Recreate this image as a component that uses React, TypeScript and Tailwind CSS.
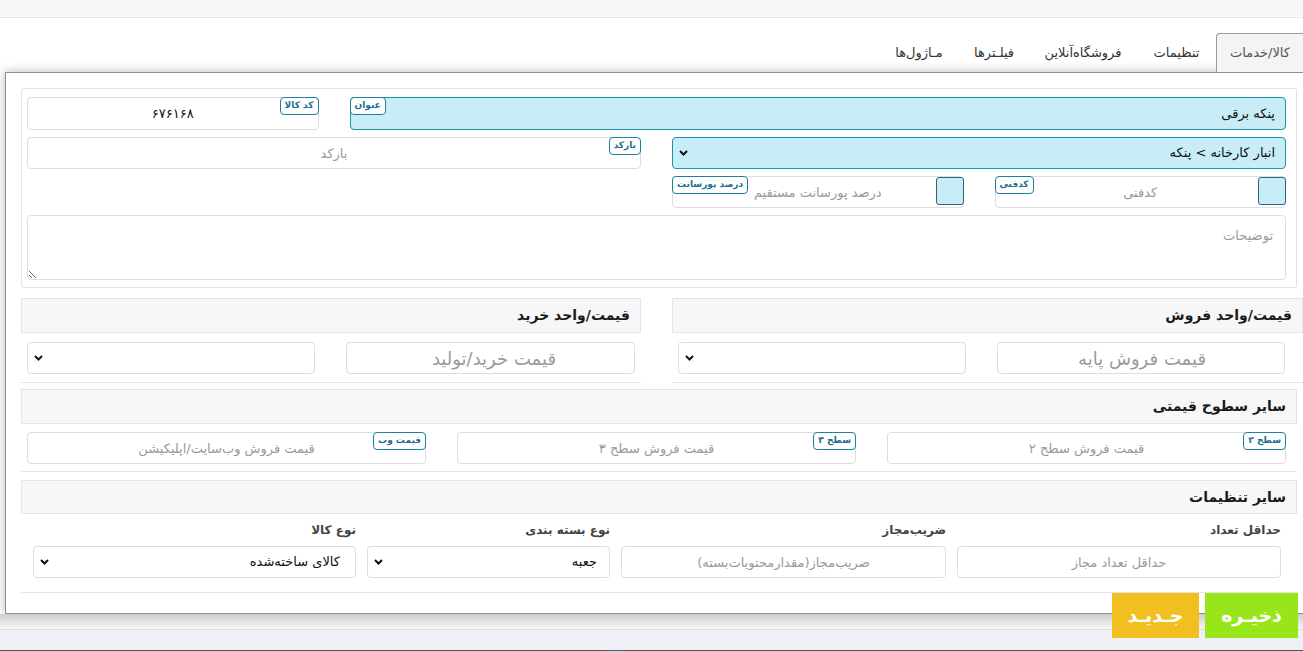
import clsx from 'clsx';

function Chevron() {
  return (
    <svg width="9" height="6" viewBox="0 0 9 6" className="shrink-0">
      <path d="M1 1l3.5 3.5L8 1" stroke="#111" strokeWidth="2" fill="none" />
    </svg>
  );
}

function Badge({ label, side = 'right' }: { label: string; side?: 'left' | 'right' }) {
  return (
    <span
      className={clsx(
        'absolute top-0 flex h-[18px] items-center rounded-[4px] border border-[#1d7fa3] bg-white px-[4px] text-[9px] font-bold text-[#1a6f8f]',
        side === 'left' ? 'left-0' : 'right-0',
      )}
    >
      {label}
    </span>
  );
}

function Field({
  placeholder,
  value,
  badge,
  badgeSide,
  className,
  square,
}: {
  placeholder?: string;
  value?: string;
  badge?: string;
  badgeSide?: 'left' | 'right';
  className?: string;
  square?: boolean;
}) {
  return (
    <div className={clsx('relative h-[32px]', className)}>
      <input
        readOnly
        placeholder={placeholder}
        value={value ?? ''}
        className="h-full w-full rounded-[4px] border border-[#dddddd] bg-white text-center text-[13px] text-[#111] outline-none placeholder:text-[#9a9a9a]"
      />
      {square && (
        <span className="absolute top-[1px] right-0 h-[28px] w-[28px] rounded-[3px] border border-[#2d6478] bg-[#c9edf6]" />
      )}
      {badge && <Badge label={badge} side={badgeSide} />}
    </div>
  );
}

function Select({ value, className, cyan }: { value?: string; className?: string; cyan?: boolean }) {
  return (
    <div
      className={clsx(
        'flex h-[32px] items-center justify-between rounded-[4px] border pl-[6px] text-[13px] text-[#111]',
        cyan ? 'border-[#1b95a8] bg-[#c9edf6] pr-[10px]' : 'border-[#dddddd] bg-white pr-[12px]',
        className,
      )}
    >
      <span>{value}</span>
      <Chevron />
    </div>
  );
}

function CardHeader({ title, className }: { title: string; className?: string }) {
  return (
    <div
      className={clsx(
        'flex items-center border border-[#e5e5e5] bg-[#f7f7f7] pr-[10px] text-[14px] font-bold text-[#1a1a1a]',
        className,
      )}
    >
      {title}
    </div>
  );
}

const tabs = [
  { label: 'تنظیمات', w: 'w-[79px]' },
  { label: 'فروشگاه‌آنلاین', w: 'w-[108px]' },
  { label: 'فیلـترها', w: 'w-[70px]' },
  { label: 'مـاژول‌ها', w: 'w-[80px]' },
];

export default function App() {
  return (
    <div className="relative h-[651px] w-[1303px] overflow-hidden bg-white font-['Tahoma','DejaVu_Sans',sans-serif] text-[13px] text-[#222]">
      <div className="h-[18px] border-b border-[#e6e6e6] bg-[#f8f8f8]" />

      {/* tabs */}
      <div dir="rtl" className="relative z-10 mt-[15px] flex h-[39px]">
        <div className="flex w-[87px] items-center justify-center rounded-tl-[4px] border-t border-l border-[#9a9a9a] bg-[#f4f4f4] text-[#555]">
          کالا/خدمات
        </div>
        {tabs.map((t) => (
          <div key={t.label} className={clsx('flex items-center justify-center text-[#333]', t.w)}>
            {t.label}
          </div>
        ))}
      </div>

      {/* panel */}
      <div
        dir="rtl"
        className="ml-[5px] w-[1310px] border border-[#8c8c8c] bg-white pt-[15px] pr-[17px] pb-[20px] pl-[15px] shadow-[0_0_10px_rgba(0,0,0,0.28)]"
      >
        <div className="rounded-[3px] border border-[#e3e3e3] pt-[8px] pr-[10px] pb-[7px] pl-[5px]">
          <div className="grid grid-cols-4 gap-x-[31px] gap-y-[7px]">
            <div className="relative col-span-3 h-[33px]">
              <div className="flex h-full items-center rounded-[4px] border border-[#1b95a8] bg-[#c9edf6] pr-[10px] text-[13px] text-[#111]">
                پنکه برقی
              </div>
              <Badge label="عنوان" side="left" />
            </div>
            <Field value="۶۷۶۱۶۸" badge="کد کالا" className="h-[33px]" />

            <Select value="انبار کارخانه > پنکه" cyan className="col-span-2" />
            <Field placeholder="بارکد" badge="بارکد" className="col-span-2" />

            <Field placeholder="کدفنی" badge="کدفنی" badgeSide="left" square />
            <Field placeholder="درصد پورسانت مستقیم" badge="درصد پورسانت" badgeSide="left" square />
            <div />
            <div />

            <textarea
              readOnly
              placeholder="توضیحات"
              className="col-span-4 h-[65px] rounded-[4px] border border-[#dddddd] px-[12px] pt-[10px] text-[13px] outline-none placeholder:text-[#9a9a9a]"
            />
          </div>
        </div>

        {/* prices */}
        <div className="mt-[10px] -mr-[6px] flex gap-[31px]">
          <div className="w-[631px] border-b border-[#e5e5e5]">
            <CardHeader title="قیمت/واحد فروش" className="h-[35px]" />
            <div className="flex gap-[31px] pt-[9px] pr-[18px] pb-[8px] pl-[6px]">
              <div className="flex h-[32px] w-[288px] items-center rounded-[4px] border border-[#dddddd] pr-[78px] text-[18px] text-[#9a9a9a]">
                قیمت فروش پایه
              </div>
              <Select className="w-[288px]" />
            </div>
          </div>
          <div className="w-[620px] border-b border-[#e5e5e5]">
            <CardHeader title="قیمت/واحد خرید" className="h-[35px]" />
            <div className="flex gap-[31px] px-[6px] pt-[9px] pb-[8px]">
              <div className="flex h-[32px] w-[289px] items-center rounded-[4px] border border-[#dddddd] pr-[78px] text-[18px] text-[#9a9a9a]">
                قیمت خرید/تولید
              </div>
              <Select className="w-[288px]" />
            </div>
          </div>
        </div>

        {/* price levels */}
        <div className="mt-[6px] border-b border-[#e5e5e5]">
          <CardHeader title="سایر سطوح قیمتی" className="h-[35px]" />
          <div className="grid grid-cols-3 gap-[31px] pt-[8px] pr-[11px] pb-[7px] pl-[6px]">
            <Field placeholder="قیمت فروش سطح ۲" badge="سطح ۲" />
            <Field placeholder="قیمت فروش سطح ۳" badge="سطح ۳" />
            <Field placeholder="قیمت فروش وب‌سایت/اپلیکیشن" badge="قیمت وب" />
          </div>
        </div>

        {/* other settings */}
        <div className="mt-[8px] border-b border-[#e5e5e5]">
          <CardHeader title="سایر تنظیمات" className="h-[34px]" />
          <div className="flex gap-[11px] pt-[7px] pr-[16px] pb-[14px] pl-[11px]">
            <div className="w-[324px]">
              <div className="mb-[5px] h-[20px] text-[12px] font-bold text-[#444]">حداقل تعداد</div>
              <Field placeholder="حداقل تعداد مجاز" />
            </div>
            <div className="w-[325px]">
              <div className="mb-[5px] h-[20px] text-[12px] font-bold text-[#444]">ضریب‌مجاز</div>
              <Field placeholder="ضریب‌مجاز(مقدارمحتویات‌بسته)" />
            </div>
            <div className="w-[243px]">
              <div className="mb-[5px] h-[20px] text-[12px] font-bold text-[#444]">نوع بسته بندی</div>
              <Select value="جعبه" />
            </div>
            <div className="w-[323px]">
              <div className="mb-[5px] h-[20px] text-[12px] font-bold text-[#444]">نوع کالا</div>
              <Select value="کالای ساخته‌شده" className="pr-[15px]" />
            </div>
          </div>
        </div>
      </div>

      {/* footer strip */}
      <div className="h-[15px] bg-linear-to-b from-[#cdcdcd] to-[#f7f7f7]" />
      <div className="h-[21px] border-t border-[#dcdcdc] bg-[#eff0f5]" />
      <div className="flex h-[2px] bg-[#555]">
        <div className="ml-[607px] w-[13px] bg-[#1a6fa5]" />
      </div>

      {/* action buttons */}
      <div dir="rtl" className="absolute top-[593px] right-[5px] z-20 flex gap-[6px]">
        <button className="flex h-[45px] w-[93px] items-center justify-center bg-[#98e619] text-[19px] font-bold text-white">
          ذخیـره
        </button>
        <button className="flex h-[45px] w-[87px] items-center justify-center bg-[#f1c020] text-[19px] font-bold text-white">
          جـدیـد
        </button>
      </div>
    </div>
  );
}
